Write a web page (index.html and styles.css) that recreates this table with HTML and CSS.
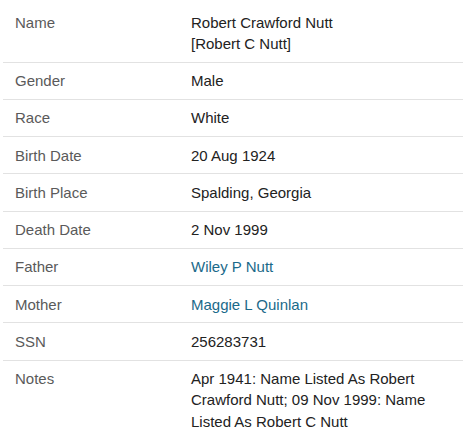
FILE: index.html
```html
<!DOCTYPE html>
<html>
<head>
<meta charset="utf-8">
<link rel="stylesheet" href="styles.css">
</head>
<body>
<div class="record">
  <div class="row first">
    <div class="label">Name</div>
    <div class="value">Robert Crawford Nutt<br>[Robert C Nutt]</div>
  </div>
  <div class="row">
    <div class="label">Gender</div>
    <div class="value">Male</div>
  </div>
  <div class="row">
    <div class="label">Race</div>
    <div class="value">White</div>
  </div>
  <div class="row">
    <div class="label">Birth Date</div>
    <div class="value">20 Aug 1924</div>
  </div>
  <div class="row">
    <div class="label">Birth Place</div>
    <div class="value">Spalding, Georgia</div>
  </div>
  <div class="row">
    <div class="label">Death Date</div>
    <div class="value">2 Nov 1999</div>
  </div>
  <div class="row">
    <div class="label">Father</div>
    <div class="value"><a class="link" href="#">Wiley P Nutt</a></div>
  </div>
  <div class="row">
    <div class="label">Mother</div>
    <div class="value"><a class="link" href="#">Maggie L Quinlan</a></div>
  </div>
  <div class="row">
    <div class="label">SSN</div>
    <div class="value">256283731</div>
  </div>
  <div class="row">
    <div class="label">Notes</div>
    <div class="value">Apr 1941: Name Listed As Robert Crawford Nutt; 09 Nov 1999: Name Listed As Robert C Nutt</div>
  </div>
</div>
</body>
</html>
```
FILE: styles.css
```css
html, body {
  margin: 0;
  padding: 0;
  background: #ffffff;
}
body {
  font-family: "Liberation Sans", Arial, sans-serif;
  font-size: 15px;
  line-height: 21.25px;
  color: #222222;
}
.record {
  margin: 4px 0 0 3px;
  width: 470px;
}
.row {
  display: grid;
  grid-template-columns: 176px 1fr;
  border-top: 1px solid #e2e2e2;
}
.row.first {
  border-top: none;
}
.label {
  padding: 7.5px 12px;
  color: #5a5a5a;
}
.value {
  padding: 7.5px 12px;
  color: #222222;
  max-width: 240px;
}
.link {
  color: #1b6a8a;
  text-decoration: none;
}
```
